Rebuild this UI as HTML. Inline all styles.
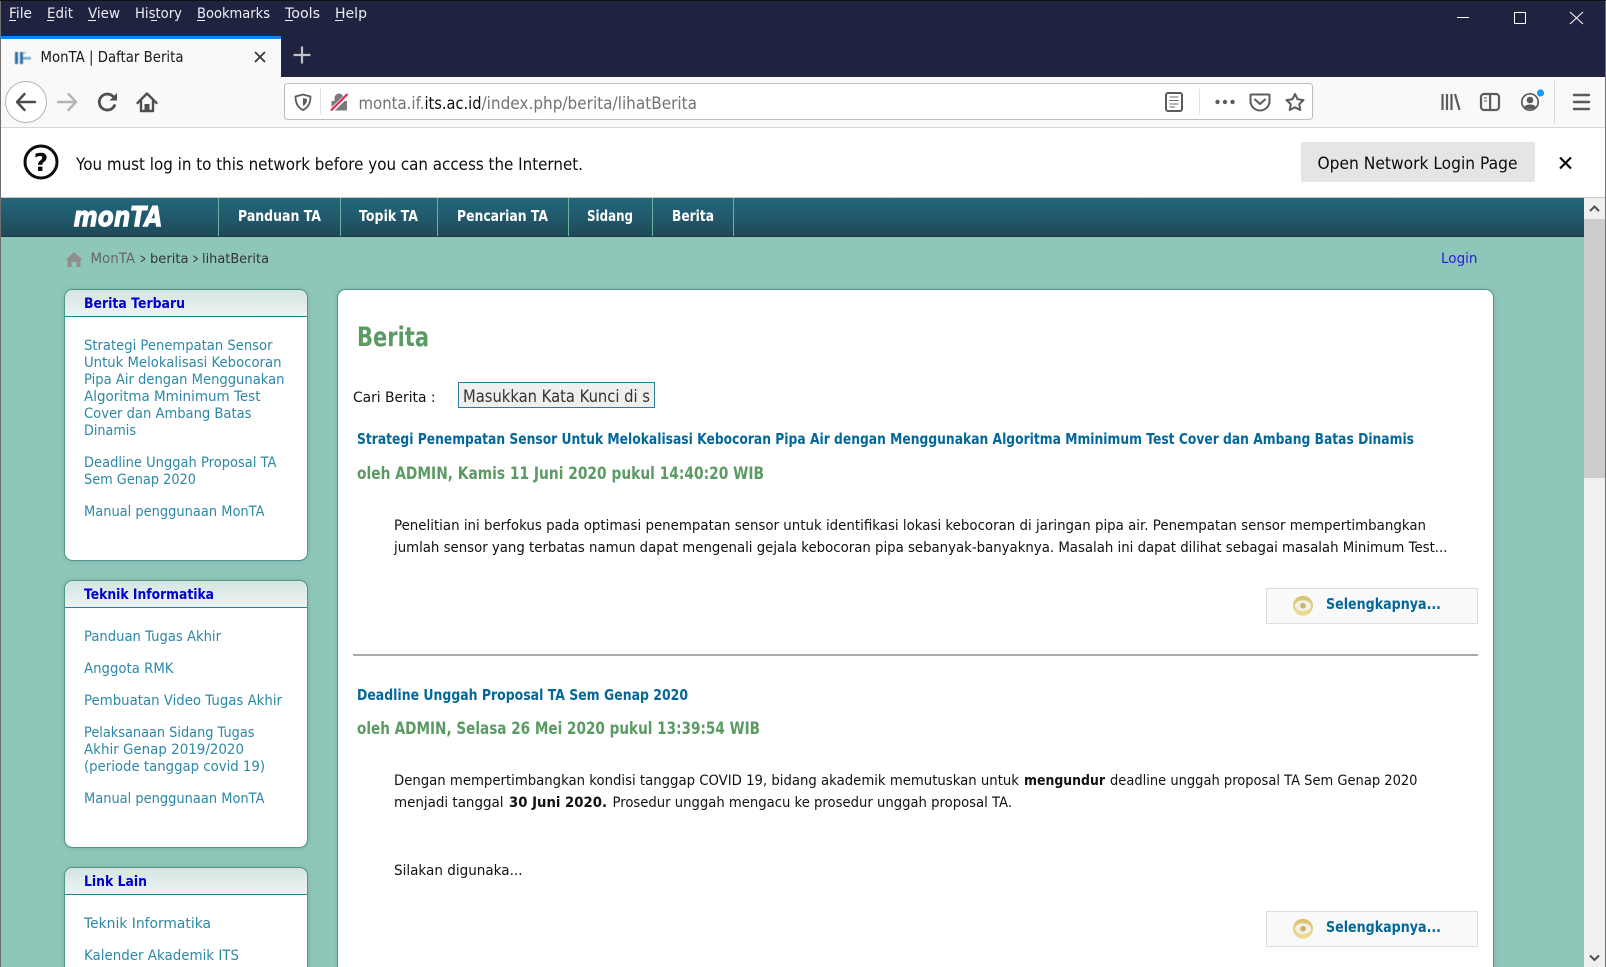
<!DOCTYPE html>
<html><head><meta charset="utf-8"><title>MonTA | Daftar Berita</title>
<style>
html,body{margin:0;padding:0;background:#fff;width:1606px;height:967px;overflow:hidden}
svg{display:block}
text{font-family:"DejaVu Sans",sans-serif;white-space:pre}
.m{font-size:14px;fill:#eceef5}
.l{font-size:14.5px;fill:#2d88a6}
.h{font-size:14.5px;font-weight:bold;fill:#0000cc}
.n{font-size:15px;font-weight:bold;fill:#fff}
.t{font-size:15px;font-weight:bold;fill:#03679b}
.o{font-size:17px;font-weight:bold;fill:#5b9a62}
.b{font-size:14.5px;fill:#111}
.bb{font-size:14.5px;font-weight:bold;fill:#111}
.i{fill:none;stroke:#5b5b5f;stroke-width:2;stroke-linecap:round;stroke-linejoin:round}
</style></head><body>
<svg xmlns="http://www.w3.org/2000/svg" width="1606" height="967" viewBox="0 0 1606 967">
<defs>
<linearGradient id="nav" x1="0" y1="0" x2="0" y2="1"><stop offset="0" stop-color="#236579"/><stop offset=".35" stop-color="#225e72"/><stop offset="1" stop-color="#1f4957"/></linearGradient>
<linearGradient id="hd" x1="0" y1="0" x2="0" y2="1"><stop offset="0" stop-color="#d3e5e1"/><stop offset="1" stop-color="#eef3f2"/></linearGradient>
<linearGradient id="eye" x1="0" y1="0" x2="0" y2="1"><stop offset="0" stop-color="#d9c06a"/><stop offset=".55" stop-color="#e3cf84"/><stop offset="1" stop-color="#f0dc8e"/></linearGradient>
<filter id="sh" x="-5%" y="-5%" width="110%" height="110%"><feGaussianBlur stdDeviation="3"/></filter>
<filter id="bl" x="-20%" y="-20%" width="140%" height="140%"><feGaussianBlur stdDeviation=".5"/></filter>
<g id="eyeI"><circle r="10" fill="url(#eye)"/><ellipse rx="8" ry="5.500" fill="#f1efe6"/><circle r="2.800" fill="#c9b26a"/></g>
</defs>

<!-- page background -->
<rect x="0" y="197" width="1606" height="770" fill="#8fc6ba"/>

<!-- chrome -->
<rect width="1606" height="77" fill="#1f2340"/>
<rect width="1606" height="1" fill="#111"/>
<rect x="1" y="36" width="280" height="41" fill="#f9f9fa"/>
<rect x="1" y="36" width="280" height="3" fill="#0a84ff"/>
<rect x="0" y="77" width="1606" height="50" fill="#f9f9fa"/>
<rect x="0" y="127" width="1606" height="1" fill="#d7d7db"/>
<rect x="0" y="128" width="1606" height="69" fill="#fff"/>
<rect x="0" y="197" width="1606" height="1" fill="#c8c8c8"/>

<!-- menu -->
<text class="m" x="9" y="18" textLength="23" lengthAdjust="spacingAndGlyphs">File</text>
<text class="m" x="47" y="18" textLength="26" lengthAdjust="spacingAndGlyphs">Edit</text>
<text class="m" x="88" y="18" textLength="32" lengthAdjust="spacingAndGlyphs">View</text>
<text class="m" x="135" y="18" textLength="47" lengthAdjust="spacingAndGlyphs">History</text>
<text class="m" x="197" y="18" textLength="73" lengthAdjust="spacingAndGlyphs">Bookmarks</text>
<text class="m" x="285" y="18" textLength="35" lengthAdjust="spacingAndGlyphs">Tools</text>
<text class="m" x="335" y="18" textLength="32" lengthAdjust="spacingAndGlyphs">Help</text>
<g fill="#eceef5"><rect x="9" y="20" width="7" height="1"/><rect x="47" y="20" width="7" height="1"/><rect x="88" y="20" width="8" height="1"/><rect x="151" y="20" width="6" height="1"/><rect x="197" y="20" width="8" height="1"/><rect x="285" y="20" width="8" height="1"/><rect x="335" y="20" width="8" height="1"/></g>

<!-- window controls -->
<rect x="1457" y="17" width="12" height="1" fill="#fff"/>
<rect x="1514.500" y="12.500" width="11" height="11" fill="none" stroke="#fff"/>
<path d="M1570 12L1583 24M1583 12L1570 24" stroke="#fff" fill="none"/>

<!-- tab -->
<g filter="url(#bl)"><rect x="15" y="52" width="3" height="12" fill="#2f6fa3"/><rect x="20" y="52" width="3" height="12" fill="#2f6fa3"/><rect x="23" y="57" width="8" height="2.500" fill="#6fa6cc"/><rect x="23" y="52" width="3" height="1.500" fill="#8dbbd8"/></g>
<text x="40.500" y="62" style="font-size:15px" fill="#18181a" textLength="143" lengthAdjust="spacingAndGlyphs">MonTA | Daftar Berita</text>
<path d="M255 52L265 62M265 52L255 62" stroke="#38383d" stroke-width="1.800" fill="none"/>
<path d="M293.500 55H310.500M302 46.500V63.500" stroke="#c2c2ca" stroke-width="2.200" fill="none"/>

<!-- nav buttons -->
<circle cx="26" cy="102" r="20.500" fill="#fff" stroke="#b5b5b5"/>
<path d="M17 102H35M24.500 94L17 102L24.500 110" fill="none" stroke="#4a4a4f" stroke-width="2.400" stroke-linejoin="round" stroke-linecap="round"/>
<path d="M58 102H76M68.500 94L76 102L68.500 110" fill="none" stroke="#b4b4b6" stroke-width="2.400" stroke-linejoin="round" stroke-linecap="round"/>
<path d="M114.500 105.500A8 8 0 1 1 112.500 96L115.500 98.500" fill="none" stroke="#4f4f53" stroke-width="2.800" stroke-linecap="round"/>
<path d="M117 93V100.500H109.500Z" fill="#4f4f53"/>
<path d="M137.500 103L147 93.500L156.500 103M141 101V111H153V101" fill="none" stroke="#4f4f53" stroke-width="2.400" stroke-linecap="round" stroke-linejoin="round"/>
<rect x="144.500" y="104" width="5" height="7" fill="#4f4f53"/>

<!-- url bar -->
<rect x="284.500" y="83.500" width="1028" height="36" rx="3" fill="#fff" stroke="#bdbdbd"/>
<path d="M303 94.500L310.500 96.500C310.500 103 308.500 107.500 303 110C297.500 107.500 295.500 103 295.500 96.500Z" fill="none" stroke="#5b5b5f" stroke-width="1.800" stroke-linejoin="round"/>
<path d="M303 98L307 99C307 102.500 306 104.500 303 106Z" fill="#5b5b5f"/>
<rect x="320" y="88" width="1" height="26" fill="#e3e3e5"/>
<path d="M334.500 101V98A4.500 4.500 0 0 1 343.500 98V101H347V110.500H331.500V101Z" fill="#7a7a7e"/>
<path d="M330 112L347 95.500" stroke="#fff" stroke-width="4.500" fill="none"/>
<path d="M331 110.500L347.500 94" stroke="#e22850" stroke-width="2.200" fill="none"/>
<text x="358.500" y="109" style="font-size:17px" fill="#737373" textLength="66" lengthAdjust="spacingAndGlyphs">monta.if.</text>
<text x="424.500" y="109" style="font-size:17px" fill="#0c0c0d" textLength="57" lengthAdjust="spacingAndGlyphs">its.ac.id</text>
<text x="481.500" y="109" style="font-size:17px" fill="#737373" textLength="215.500" lengthAdjust="spacingAndGlyphs">/index.php/berita/lihatBerita</text>
<rect x="1166" y="93" width="16" height="18" rx="2" fill="none" stroke="#5b5b5f" stroke-width="2"/>
<path d="M1169.500 97H1178.500M1169.500 100.500H1178.500M1169.500 104H1178.500M1169.500 107H1175" stroke="#6a6a6e" fill="none"/>
<rect x="1199" y="89" width="1" height="26" fill="#e3e3e5"/>
<g fill="#5b5b5f"><circle cx="1217.500" cy="102" r="2.200"/><circle cx="1225" cy="102" r="2.200"/><circle cx="1232.500" cy="102" r="2.200"/></g>
<path d="M1251.500 94.500H1268.500A1 1 0 0 1 1269.500 95.500V101A9.500 9.500 0 0 1 1250.500 101V95.500A1 1 0 0 1 1251.500 94.500Z" class="i"/>
<path d="M1255 99.500L1260 104L1265 99.500" class="i"/>
<path d="M1295 94L1297.600 99.300L1303.500 100.100L1299.200 104.200L1300.300 110L1295 107.300L1289.700 110L1290.800 104.200L1286.500 100.100L1292.400 99.300Z" class="i"/>

<!-- right tools -->
<path d="M1442.500 94V110M1447 94V110M1451.500 94V110M1455 94L1459.500 110" stroke="#5b5b5f" stroke-width="2.200" fill="none"/>
<rect x="1481" y="94" width="18" height="16" rx="3" fill="none" stroke="#5b5b5f" stroke-width="2.200"/>
<rect x="1489" y="94" width="2.200" height="16" fill="#5b5b5f"/>
<path d="M1484 98H1487M1484 101H1487" stroke="#5b5b5f" fill="none"/>
<circle cx="1530" cy="102" r="8.200" fill="none" stroke="#5b5b5f" stroke-width="1.700"/>
<circle cx="1530" cy="100" r="3.300" fill="#5b5b5f"/>
<path d="M1524 107.500C1525 103.500 1535 103.500 1536 107.500C1534 109.500 1526 109.500 1524 107.500Z" fill="#5b5b5f"/>
<circle cx="1540.500" cy="93" r="3.600" fill="#0a9dff"/>
<rect x="1554" y="81" width="1" height="42" fill="#d7d7db"/>
<path d="M1574 95H1589M1574 102H1589M1574 109H1589" stroke="#5b5b5f" stroke-width="2.400" stroke-linecap="round" fill="none"/>

<!-- notification -->
<circle cx="41" cy="162" r="16" fill="none" stroke="#0c0c0d" stroke-width="3"/>
<text x="41" y="171" text-anchor="middle" style="font-size:25px;font-weight:bold" fill="#0c0c0d">?</text>
<text x="76" y="170" style="font-size:17px" fill="#0c0c0d" textLength="507" lengthAdjust="spacingAndGlyphs">You must log in to this network before you can access the Internet.</text>
<rect x="1301" y="142" width="234" height="40" rx="2" fill="#e5e5e5"/>
<text x="1317.500" y="169" style="font-size:17px" fill="#0c0c0d" textLength="200" lengthAdjust="spacingAndGlyphs">Open Network Login Page</text>
<path d="M1560 157.500L1571 168.500M1571 157.500L1560 168.500" stroke="#0c0c0d" stroke-width="2.200" fill="none"/>

<!-- site nav -->
<rect x="1" y="198" width="1604" height="38" fill="url(#nav)"/>
<rect x="1" y="236" width="1604" height="1" fill="#1e3a42"/>
<g fill="#6ab2a4"><rect x="218" y="198" width="1" height="38"/><rect x="340" y="198" width="1" height="38"/><rect x="437" y="198" width="1" height="38"/><rect x="568" y="198" width="1" height="38"/><rect x="652" y="198" width="1" height="38"/><rect x="733" y="198" width="1" height="38"/></g>
<text x="73.500" y="226" style="font-size:28px;font-weight:bold;font-style:italic;stroke:#fff;stroke-width:1" fill="#fff" textLength="89" lengthAdjust="spacingAndGlyphs">monTA</text>
<text class="n" x="238" y="221" textLength="83" lengthAdjust="spacingAndGlyphs">Panduan TA</text>
<text class="n" x="359" y="221" textLength="59" lengthAdjust="spacingAndGlyphs">Topik TA</text>
<text class="n" x="457" y="221" textLength="91" lengthAdjust="spacingAndGlyphs">Pencarian TA</text>
<text class="n" x="587" y="221" textLength="46" lengthAdjust="spacingAndGlyphs">Sidang</text>
<text class="n" x="672" y="221" textLength="42" lengthAdjust="spacingAndGlyphs">Berita</text>

<!-- breadcrumb -->
<path d="M74 252L82.500 260H80.500V267H76.500V262H71.500V267H67.500V260H65.500Z" fill="#8f8f8f"/>
<text x="90.500" y="263" style="font-size:14.5px" fill="#666" textLength="44.500" lengthAdjust="spacingAndGlyphs">MonTA</text>
<text x="140" y="263" style="font-size:13px" fill="#333" textLength="6" lengthAdjust="spacingAndGlyphs">&gt;</text>
<text x="150" y="263" style="font-size:13.5px" fill="#333" textLength="38.500" lengthAdjust="spacingAndGlyphs">berita</text>
<text x="192.500" y="263" style="font-size:13px" fill="#333" textLength="6" lengthAdjust="spacingAndGlyphs">&gt;</text>
<text x="202" y="263" style="font-size:13.5px" fill="#333" textLength="67" lengthAdjust="spacingAndGlyphs">lihatBerita</text>
<text x="1441" y="263" style="font-size:14.5px" fill="#2a1ecf" textLength="36.500" lengthAdjust="spacingAndGlyphs">Login</text>

<!-- sidebar box 1 -->
<rect x="64.500" y="289.500" width="243" height="271" rx="8" fill="#5a9a8d" opacity=".55" filter="url(#sh)"/>
<rect x="64.500" y="289.500" width="243" height="271" rx="8" fill="#fff" stroke="#4f9589"/>
<path d="M65 316V298A8 8 0 0 1 73 290H299A8 8 0 0 1 307 298V316Z" fill="url(#hd)"/>
<rect x="65" y="316" width="242" height="1" fill="#2a8095"/>
<text class="h" x="84" y="308" textLength="101" lengthAdjust="spacingAndGlyphs">Berita Terbaru</text>
<text class="l" x="84" y="350" textLength="188.500" lengthAdjust="spacingAndGlyphs">Strategi Penempatan Sensor</text>
<text class="l" x="84" y="367" textLength="197.500" lengthAdjust="spacingAndGlyphs">Untuk Melokalisasi Kebocoran</text>
<text class="l" x="84" y="384" textLength="200.500" lengthAdjust="spacingAndGlyphs">Pipa Air dengan Menggunakan</text>
<text class="l" x="84" y="401" textLength="176.500" lengthAdjust="spacingAndGlyphs">Algoritma Mminimum Test</text>
<text class="l" x="84" y="418" textLength="167.500" lengthAdjust="spacingAndGlyphs">Cover dan Ambang Batas</text>
<text class="l" x="84" y="435" textLength="52" lengthAdjust="spacingAndGlyphs">Dinamis</text>
<text class="l" x="84" y="467" textLength="192.500" lengthAdjust="spacingAndGlyphs">Deadline Unggah Proposal TA</text>
<text class="l" x="84" y="484" textLength="112" lengthAdjust="spacingAndGlyphs">Sem Genap 2020</text>
<text class="l" x="84" y="516" textLength="180.500" lengthAdjust="spacingAndGlyphs">Manual penggunaan MonTA</text>

<!-- sidebar box 2 -->
<rect x="64.500" y="580.500" width="243" height="267" rx="8" fill="#5a9a8d" opacity=".55" filter="url(#sh)"/>
<rect x="64.500" y="580.500" width="243" height="267" rx="8" fill="#fff" stroke="#4f9589"/>
<path d="M65 607V589A8 8 0 0 1 73 581H299A8 8 0 0 1 307 589V607Z" fill="url(#hd)"/>
<rect x="65" y="607" width="242" height="1" fill="#2a8095"/>
<text class="h" x="84" y="599" textLength="130" lengthAdjust="spacingAndGlyphs">Teknik Informatika</text>
<text class="l" x="84" y="641" textLength="137" lengthAdjust="spacingAndGlyphs">Panduan Tugas Akhir</text>
<text class="l" x="84" y="673" textLength="89.500" lengthAdjust="spacingAndGlyphs">Anggota RMK</text>
<text class="l" x="84" y="705" textLength="198" lengthAdjust="spacingAndGlyphs">Pembuatan Video Tugas Akhir</text>
<text class="l" x="84" y="737" textLength="170.500" lengthAdjust="spacingAndGlyphs">Pelaksanaan Sidang Tugas</text>
<text class="l" x="84" y="754" textLength="160" lengthAdjust="spacingAndGlyphs">Akhir Genap 2019/2020</text>
<text class="l" x="84" y="771" textLength="181" lengthAdjust="spacingAndGlyphs">(periode tanggap covid 19)</text>
<text class="l" x="84" y="803" textLength="180.500" lengthAdjust="spacingAndGlyphs">Manual penggunaan MonTA</text>

<!-- sidebar box 3 -->
<rect x="64.500" y="867.500" width="243" height="120" rx="8" fill="#5a9a8d" opacity=".55" filter="url(#sh)"/>
<rect x="64.500" y="867.500" width="243" height="120" rx="8" fill="#fff" stroke="#4f9589"/>
<path d="M65 894V876A8 8 0 0 1 73 868H299A8 8 0 0 1 307 876V894Z" fill="url(#hd)"/>
<rect x="65" y="894" width="242" height="1" fill="#2a8095"/>
<text class="h" x="84" y="886" textLength="63" lengthAdjust="spacingAndGlyphs">Link Lain</text>
<text class="l" x="84" y="928" textLength="127" lengthAdjust="spacingAndGlyphs">Teknik Informatika</text>
<text class="l" x="84" y="960" textLength="155" lengthAdjust="spacingAndGlyphs">Kalender Akademik ITS</text>

<!-- main box -->
<rect x="337.500" y="289.500" width="1156" height="720" rx="8" fill="#5a9a8d" opacity=".55" filter="url(#sh)"/>
<rect x="337.500" y="289.500" width="1156" height="720" rx="8" fill="#fff" stroke="#4f9589"/>
<text x="357" y="346" style="font-size:27px;font-weight:bold" fill="#5b9a62" textLength="72" lengthAdjust="spacingAndGlyphs">Berita</text>
<text x="353" y="402" style="font-size:14.5px" fill="#111" textLength="82.500" lengthAdjust="spacingAndGlyphs">Cari Berita :</text>
<rect x="458.500" y="382.500" width="196" height="25" fill="#efefef" stroke="#2a7f97"/>
<text x="463" y="402" style="font-size:17px" fill="#333" textLength="187" lengthAdjust="spacingAndGlyphs">Masukkan Kata Kunci di s</text>

<text class="t" x="357" y="444" textLength="1057" lengthAdjust="spacingAndGlyphs">Strategi Penempatan Sensor Untuk Melokalisasi Kebocoran Pipa Air dengan Menggunakan Algoritma Mminimum Test Cover dan Ambang Batas Dinamis</text>
<text class="o" x="357" y="479" textLength="407" lengthAdjust="spacingAndGlyphs">oleh ADMIN, Kamis 11 Juni 2020 pukul 14:40:20 WIB</text>
<text class="b" x="394" y="530" textLength="1032" lengthAdjust="spacingAndGlyphs">Penelitian ini berfokus pada optimasi penempatan sensor untuk identifikasi lokasi kebocoran di jaringan pipa air. Penempatan sensor mempertimbangkan</text>
<text class="b" x="394" y="552" textLength="1053.500" lengthAdjust="spacingAndGlyphs">jumlah sensor yang terbatas namun dapat mengenali gejala kebocoran pipa sebanyak-banyaknya. Masalah ini dapat dilihat sebagai masalah Minimum Test...</text>

<rect x="1266.500" y="588.500" width="211" height="35" fill="#f9f9f9" stroke="#ddd"/>
<use href="#eyeI" x="1303" y="605.700"/>
<text class="t" x="1326" y="609" textLength="115" lengthAdjust="spacingAndGlyphs">Selengkapnya...</text>

<rect x="353" y="654" width="1125" height="2" fill="#aaa"/>

<text class="t" x="357" y="700" textLength="331" lengthAdjust="spacingAndGlyphs">Deadline Unggah Proposal TA Sem Genap 2020</text>
<text class="o" x="357" y="734" textLength="403" lengthAdjust="spacingAndGlyphs">oleh ADMIN, Selasa 26 Mei 2020 pukul 13:39:54 WIB</text>
<text class="b" x="394" y="785" textLength="625" lengthAdjust="spacingAndGlyphs">Dengan mempertimbangkan kondisi tanggap COVID 19, bidang akademik memutuskan untuk</text>
<text class="bb" x="1024" y="785" textLength="81" lengthAdjust="spacingAndGlyphs">mengundur</text>
<text class="b" x="1110" y="785" textLength="307.500" lengthAdjust="spacingAndGlyphs">deadline unggah proposal TA Sem Genap 2020</text>
<text class="b" x="394" y="807" textLength="109.500" lengthAdjust="spacingAndGlyphs">menjadi tanggal</text>
<text class="bb" x="509" y="807" textLength="98" lengthAdjust="spacingAndGlyphs">30 Juni 2020.</text>
<text class="b" x="612.500" y="807" textLength="399.500" lengthAdjust="spacingAndGlyphs">Prosedur unggah mengacu ke prosedur unggah proposal TA.</text>
<text class="b" x="394" y="875" textLength="128.500" lengthAdjust="spacingAndGlyphs">Silakan digunaka...</text>

<rect x="1266.500" y="911.500" width="211" height="35" fill="#f9f9f9" stroke="#ddd"/>
<use href="#eyeI" x="1303" y="928.700"/>
<text class="t" x="1326" y="932" textLength="115" lengthAdjust="spacingAndGlyphs">Selengkapnya...</text>

<!-- scrollbar -->
<rect x="1584" y="198" width="21" height="769" fill="#f0f0f0"/>
<rect x="1584" y="219" width="21" height="259" fill="#cdcdcd"/>
<path d="M1590 211L1594.500 206.500L1599 211" fill="none" stroke="#505050" stroke-width="2"/>
<path d="M1590 955.500L1594.500 960L1599 955.500" fill="none" stroke="#505050" stroke-width="2"/>

<!-- window edges -->
<rect x="0" y="1" width="1" height="966" fill="#707070"/>
<rect x="1605" y="1" width="1" height="966" fill="#707070"/>
</svg>
</body></html>
